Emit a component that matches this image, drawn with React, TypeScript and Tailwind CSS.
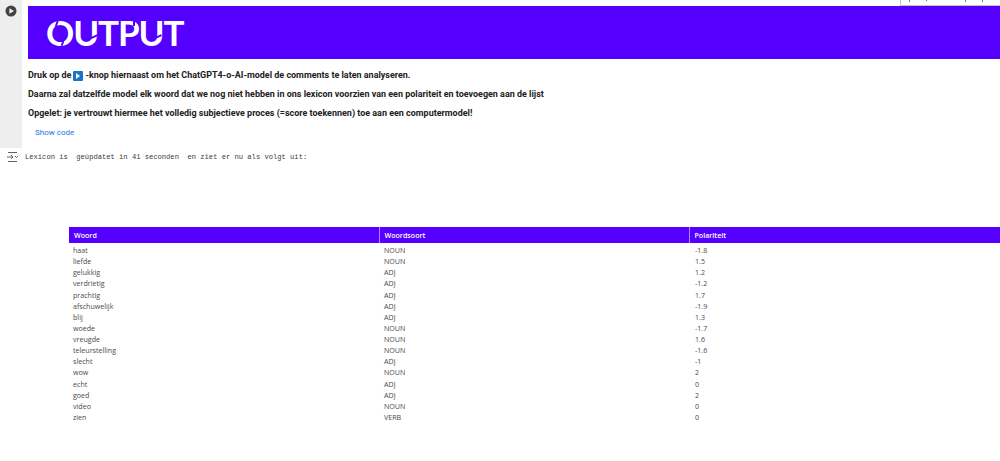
const ROWS: [string, string, string][] = [
  ["haat", "NOUN", "-1.8"],
  ["liefde", "NOUN", "1.5"],
  ["gelukkig", "ADJ", "1.2"],
  ["verdrietig", "ADJ", "-1.2"],
  ["prachtig", "ADJ", "1.7"],
  ["afschuwelijk", "ADJ", "-1.9"],
  ["blij", "ADJ", "1.3"],
  ["woede", "NOUN", "-1.7"],
  ["vreugde", "NOUN", "1.6"],
  ["teleurstelling", "NOUN", "-1.6"],
  ["slecht", "ADJ", "-1"],
  ["wow", "NOUN", "2"],
  ["echt", "ADJ", "0"],
  ["goed", "ADJ", "2"],
  ["video", "NOUN", "0"],
  ["zien", "VERB", "0"],
];

function PlayButton() {
  return (
    <svg width="12" height="12" viewBox="0 0 12 12" aria-hidden>
      <circle cx="6" cy="6" r="5.5" fill="#424242" />
      <path d="M4.4 3.2 9 6l-4.6 2.8z" fill="#eeeeee" />
    </svg>
  );
}

function OutputIcon() {
  return (
    <svg width="14" height="12" viewBox="0 0 14 12" fill="none" stroke="#5f6368" strokeWidth="1" aria-hidden>
      <path d="M2 1.5h9M2 10.5h9M1 6h6M5 4l2 2-2 2M9 5l1.5 1.5L12 5" />
    </svg>
  );
}

export default function App() {
  return (
    <div className="relative h-[461px] w-[1000px] overflow-hidden bg-white font-['Roboto',sans-serif]">
      {/* cell toolbar, cut off by the top of the window */}
      <div className="absolute top-0 right-0 flex h-[6px] w-[100px] items-start gap-[17px] border-b border-l border-[#c4c4c4] bg-white pl-[8px]">
        <span className="h-[2px] w-[2px] bg-[#777777]" />
        <span className="h-[1px] w-[2px] bg-[#777777]" />
        <span className="ml-[22px] h-[2px] w-[2px] bg-[#777777]" />
        <span className="h-[2px] w-[5px] bg-[#777777]" />
        <span className="h-[3px] w-[4px] bg-[#999999]" />
      </div>

      <div className="flex h-[148px]">
        <div className="flex w-[22px] shrink-0 justify-center bg-[#eeeeee] pt-[5px]">
          <PlayButton />
        </div>
        <div className="min-w-0 flex-1 pt-[6px] pl-[6px]">
          <div className="flex h-[53px] items-center bg-[#5500ff] pl-[18px]">
            <span className="relative font-['Lato',sans-serif] text-[35px] leading-none font-bold tracking-[-1.1px] text-white">
              OUTPUT
              {/* stencil cuts in the logo */}
              <span className="absolute top-[4px] left-[10px] h-[8px] w-[2px] rotate-[20deg] bg-[#5500ff]" />
              <span className="absolute top-[23px] left-[16px] h-[8px] w-[2px] rotate-[20deg] bg-[#5500ff]" />
              <span className="absolute top-[21px] left-[43px] h-[2px] w-[9px] -rotate-[25deg] bg-[#5500ff]" />
              <span className="absolute top-[4px] left-[87px] h-[7px] w-[2px] bg-[#5500ff]" />
              <span className="absolute top-[21px] left-[107px] h-[2px] w-[9px] -rotate-[25deg] bg-[#5500ff]" />
            </span>
          </div>
          <div className="mt-[10px] flex flex-col gap-[6px] text-[8.97px] leading-[13px] font-bold text-[#212121]">
            <p className="flex items-center">
              Druk op de
              <span className="mx-[2px] inline-flex h-[10px] w-[10px] items-center justify-center rounded-[1px] bg-[#1a73c8]">
                <span className="h-0 w-0 border-y-[3px] border-l-[4px] border-y-transparent border-l-white" />
              </span>
              -knop hiernaast om het ChatGPT4-o-AI-model de comments te laten analyseren.
            </p>
            <p>Daarna zal datzelfde model elk woord dat we nog niet hebben in ons lexicon voorzien van een polariteit en toevoegen aan de lijst</p>
            <p>Opgelet: je vertrouwt hiermee het volledig subjectieve proces (=score toekennen) toe aan een computermodel!</p>
          </div>
          <p className="mt-[6px] pl-[7px] text-[8px] leading-[13px] font-normal text-[#1a73e8]">Show code</p>
        </div>
      </div>

      <div className="mt-[3px] flex h-[12px] items-center">
        <div className="flex w-[24px] shrink-0 justify-center pl-[1px]">
          <OutputIcon />
        </div>
        <pre className="pl-[1px] font-['Liberation_Mono',monospace] text-[7.13px] leading-[12px] text-[#3b3b3b]">
          {"Lexicon is  geüpdatet in 41 seconden  en ziet er nu als volgt uit:"}
        </pre>
      </div>

      <table className="mt-[64px] ml-[69px] w-[931px] table-fixed border-collapse font-['Open_Sans',sans-serif] text-[7.1px] text-[#4a4a4a]">
        <thead>
          <tr className="h-[16px] bg-[#5500ff] text-left text-white">
            <th className="w-[310px] border-r border-[#a98bff] pl-[5px] font-semibold">Woord</th>
            <th className="w-[310px] border-r border-[#a98bff] pl-[5px] font-semibold">Woordsoort</th>
            <th className="pl-[5px] font-semibold">Polariteit</th>
          </tr>
        </thead>
        <tbody>
          <tr className="h-[2px]" />
          {ROWS.map(([word, kind, score]) => (
            <tr key={word} className="h-[11.13px] leading-[11px]">
              <td className="pl-[4px]">{word}</td>
              <td className="pl-[5px]">{kind}</td>
              <td className="pl-[6px]">{score}</td>
            </tr>
          ))}
        </tbody>
      </table>
    </div>
  );
}
